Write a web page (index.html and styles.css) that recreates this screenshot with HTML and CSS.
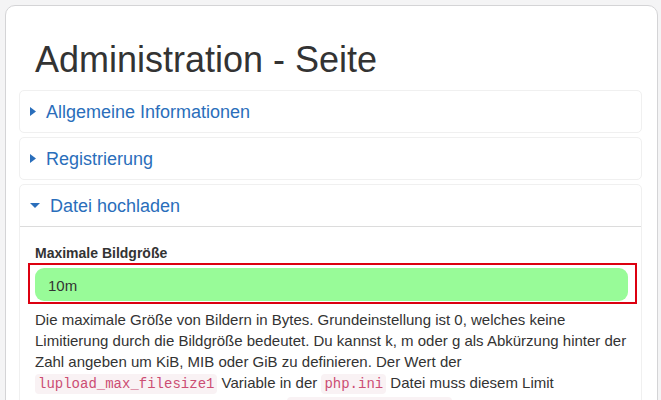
FILE: index.html
```html
<!DOCTYPE html>
<html lang="de">
<head>
<meta charset="utf-8">
<title>Administration - Seite</title>
<link rel="stylesheet" href="styles.css">
</head>
<body>
<div class="panel">
  <h1 class="title">Administration - Seite</h1>
  <div class="accordion">
    <div class="item">
      <div class="item-head">
        <svg class="caret-right" width="6" height="9" viewBox="0 0 6 9"><path d="M0 0 L6 4.5 L0 9 Z" fill="#2a6ebb"/></svg>
        <span>Allgemeine Informationen</span>
      </div>
    </div>
    <div class="item">
      <div class="item-head">
        <svg class="caret-right" width="6" height="9" viewBox="0 0 6 9"><path d="M0 0 L6 4.5 L0 9 Z" fill="#2a6ebb"/></svg>
        <span>Registrierung</span>
      </div>
    </div>
    <div class="item open">
      <div class="item-head">
        <svg class="caret-down" width="10" height="5" viewBox="0 0 10 5"><path d="M0 0 L10 0 L5 5 Z" fill="#2a6ebb"/></svg>
        <span>Datei hochladen</span>
      </div>
      <div class="item-body">
        <label class="field-label">Maximale Bildgröße</label>
        <div class="highlight">
          <div class="input">10m</div>
        </div>
        <p class="help">Die maximale Größe von Bildern in Bytes. Grundeinstellung ist 0, welches keine Limitierung durch die Bildgröße bedeutet. Du kannst k, m oder g als Abkürzung hinter der Zahl angeben um KiB, MIB oder GiB zu definieren. Der Wert der <code>lupload_max_filesize1</code> Variable in der <code>php.ini</code> Datei muss diesem Limit entsprechen. Derzeit ist der Wert von <code>upload_max_filesize</code> auf 2M gesetzt.</p>
      </div>
    </div>
  </div>
</div>
</body>
</html>
```

FILE: styles.css
```css
html, body {
  margin: 0;
  padding: 0;
}
body {
  background: #f4f4f5;
  font-family: "Liberation Sans", Arial, sans-serif;
  color: #333;
  height: 400px;
  overflow: hidden;
}
.panel {
  margin: 5px 0 0 5px;
  width: 653px;
  background: #fff;
  border: 1px solid #d4d4d6;
  border-radius: 10px;
  padding: 34px 15px 20px 13px;
  box-sizing: border-box;
  min-height: 600px;
}
.title {
  margin: 0;
  padding-left: 16px;
  font-size: 36px;
  line-height: 40px;
  font-weight: 400;
  color: #333;
}
.accordion {
  margin-top: 10px;
  display: flex;
  flex-direction: column;
  gap: 4px;
}
.item {
  border: 1px solid #f0f0f0;
  border-radius: 5px;
  background: #fff;
}
.item-head {
  height: 41px;
  display: flex;
  align-items: center;
  padding-left: 10px;
  font-size: 18px;
  color: #2a6ebb;
  box-sizing: border-box;
}
.item-head span {
  line-height: 25px;
  padding-top: 1px;
}
.caret-right {
  margin-right: 10px;
  flex: none;
}
.caret-down {
  margin-right: 10px;
  flex: none;
  margin-top: -1px;
}
.item.open .item-head {
  border-bottom: 1px solid #dcdcdc;
  height: 42px;
}
.item-body {
  padding: 16px 12px 0 15px;
}
.field-label {
  display: block;
  font-size: 14px;
  font-weight: 700;
  line-height: 20px;
  color: #333;
}
.highlight {
  margin: 0 -8px 0 -7px;
  border: 2px solid #dc0010;
  padding: 3px 7px 1px 5px;
}
.input {
  background: #98fb98;
  border-radius: 9px;
  height: 33px;
  display: flex;
  align-items: center;
  padding: 2px 0 0 13px;
  box-sizing: border-box;
  font-size: 15px;
  color: #333;
}
.help {
  margin: 5px 0 0 0;
  font-size: 15px;
  line-height: 21px;
  color: #333;
}
code {
  font-family: "Liberation Mono", "Courier New", monospace;
  font-size: 14px;
  color: #cc4d73;
  background: #f9f2f4;
  padding: 2px 3px;
  border-radius: 4px;
}
```
